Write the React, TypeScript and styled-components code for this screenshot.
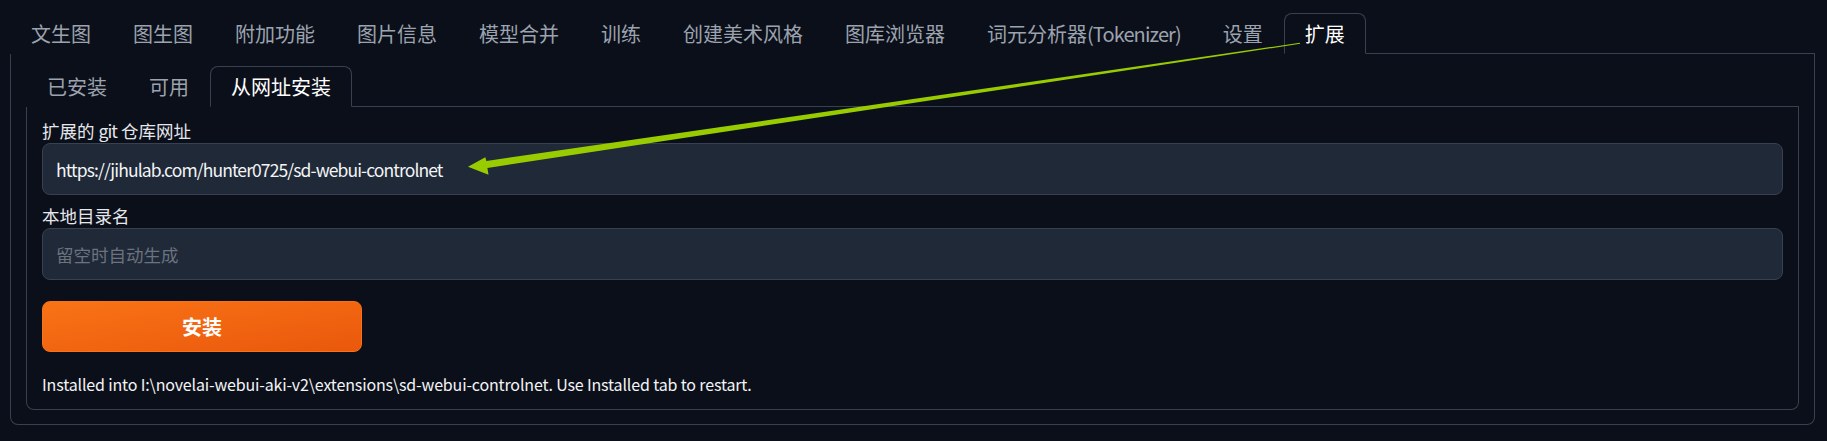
import React from "react";
import styled, { createGlobalStyle } from "styled-components";

const GlobalStyle = createGlobalStyle`
  html, body {
    margin: 0;
    padding: 0;
    background: #0b0f19;
  }
  body {
    font-family: "Noto Sans CJK SC", "Noto Sans", sans-serif;
    color: #e5e7eb;
  }
`;

const mainTabs = [
  "文生图",
  "图生图",
  "附加功能",
  "图片信息",
  "模型合并",
  "训练",
  "创建美术风格",
  "图库浏览器",
  "词元分析器",
  "设置",
  "扩展",
];

const subTabs = ["已安装", "可用", "从网址安装"];

const App = () => {
  return (
    <Page>
      <GlobalStyle />
      <TabNav>
        {mainTabs.map((t) => (
          <Tab key={t} $active={t === "扩展"}>
            {t}
            {t === "词元分析器" && <Latin>(Tokenizer)</Latin>}
          </Tab>
        ))}
      </TabNav>
      <OuterPanel>
        <TabNav>
          {subTabs.map((t) => (
            <Tab key={t} $active={t === "从网址安装"}>
              {t}
            </Tab>
          ))}
        </TabNav>
        <InnerPanel>
          <Field>
            <Label>
              扩展的 <Latin>git</Latin> 仓库网址
            </Label>
            <Input
              type="text"
              $latin
              defaultValue="https://jihulab.com/hunter0725/sd-webui-controlnet"
            />
          </Field>
          <Field>
            <Label>本地目录名</Label>
            <Input type="text" placeholder="留空时自动生成" />
          </Field>
          <InstallButton>安装</InstallButton>
          <Status>
            Installed into I:\novelai-webui-aki-v2\extensions\sd-webui-controlnet.
            Use Installed tab to restart.
          </Status>
        </InnerPanel>
      </OuterPanel>
      <Arrow width="1827" height="441" viewBox="0 0 1827 441">
        <polygon
          points="468,166.7 488.5,174.8 487.4,167.9 1300.1,43.8 1299.9,42.8 486.4,161.0 485.3,157.2"
          fill="#99cc00"
        />
      </Arrow>
    </Page>
  );
};

const Page = styled.div`
  position: relative;
  width: 1815px;
  height: 441px;
  box-sizing: border-box;
  padding: 13px 0 0 10px;
`;

const TabNav = styled.div`
  display: flex;
  border-bottom: 1px solid #374151;
`;

const Tab = styled.div<{ $active?: boolean }>`
  height: 41px;
  box-sizing: border-box;
  padding: 0 20px;
  margin-bottom: -1px;
  display: flex;
  align-items: center;
  font-size: 20px;
  white-space: nowrap;
  border: 1px solid ${(p) => (p.$active ? "#374151" : "transparent")};
  border-bottom: 1px solid ${(p) => (p.$active ? "#0b0f19" : "transparent")};
  border-radius: 8px 8px 0 0;
  background: #0b0f19;
  color: ${(p) => (p.$active ? "#ffffff" : "#9ca3af")};
`;

const Latin = styled.span`
  letter-spacing: -0.9px;
`;

const OuterPanel = styled.div`
  border: 1px solid #374151;
  border-top: none;
  border-radius: 0 0 8px 8px;
  padding: 12px 15px 14px;
`;

const InnerPanel = styled.div`
  display: flex;
  flex-direction: column;
  border: 1px solid #374151;
  border-top: none;
  border-radius: 0 0 8px 8px;
  padding: 13px 15px 14px;
`;

const Field = styled.div`
  display: flex;
  flex-direction: column;
  margin-bottom: 10px;

  & + & {
    margin-bottom: 21px;
  }
`;

const Label = styled.label`
  font-size: 17.5px;
  line-height: 22px;
  margin-bottom: 1px;
  color: #e5e7eb;
`;

const Input = styled.input<{ $latin?: boolean }>`
  height: 52px;
  box-sizing: border-box;
  padding: 0 13px;
  border: 1px solid #374151;
  border-radius: 8px;
  background: #1f2937;
  color: #f3f4f6;
  font-family: "Noto Sans CJK SC", "Noto Sans", sans-serif;
  font-size: 17.5px;
  letter-spacing: ${(p) => (p.$latin ? "-0.9px" : "0")};
  outline: none;

  &::placeholder {
    color: #6b7280;
  }
`;

const InstallButton = styled.button`
  width: 320px;
  height: 51px;
  border: 1px solid #f97316;
  border-radius: 8px;
  background: linear-gradient(to bottom right, #f97316, #ea580c);
  color: #ffffff;
  font-family: "Noto Sans CJK SC", "Noto Sans", sans-serif;
  font-size: 20px;
  font-weight: 700;
  cursor: pointer;
`;

const Status = styled.div`
  margin-top: 21px;
  font-size: 16px;
  line-height: 22px;
  letter-spacing: -0.15px;
  color: #f3f4f6;
`;

const Arrow = styled.svg`
  position: absolute;
  top: 0;
  left: 0;
  pointer-events: none;
`;

export default App;
